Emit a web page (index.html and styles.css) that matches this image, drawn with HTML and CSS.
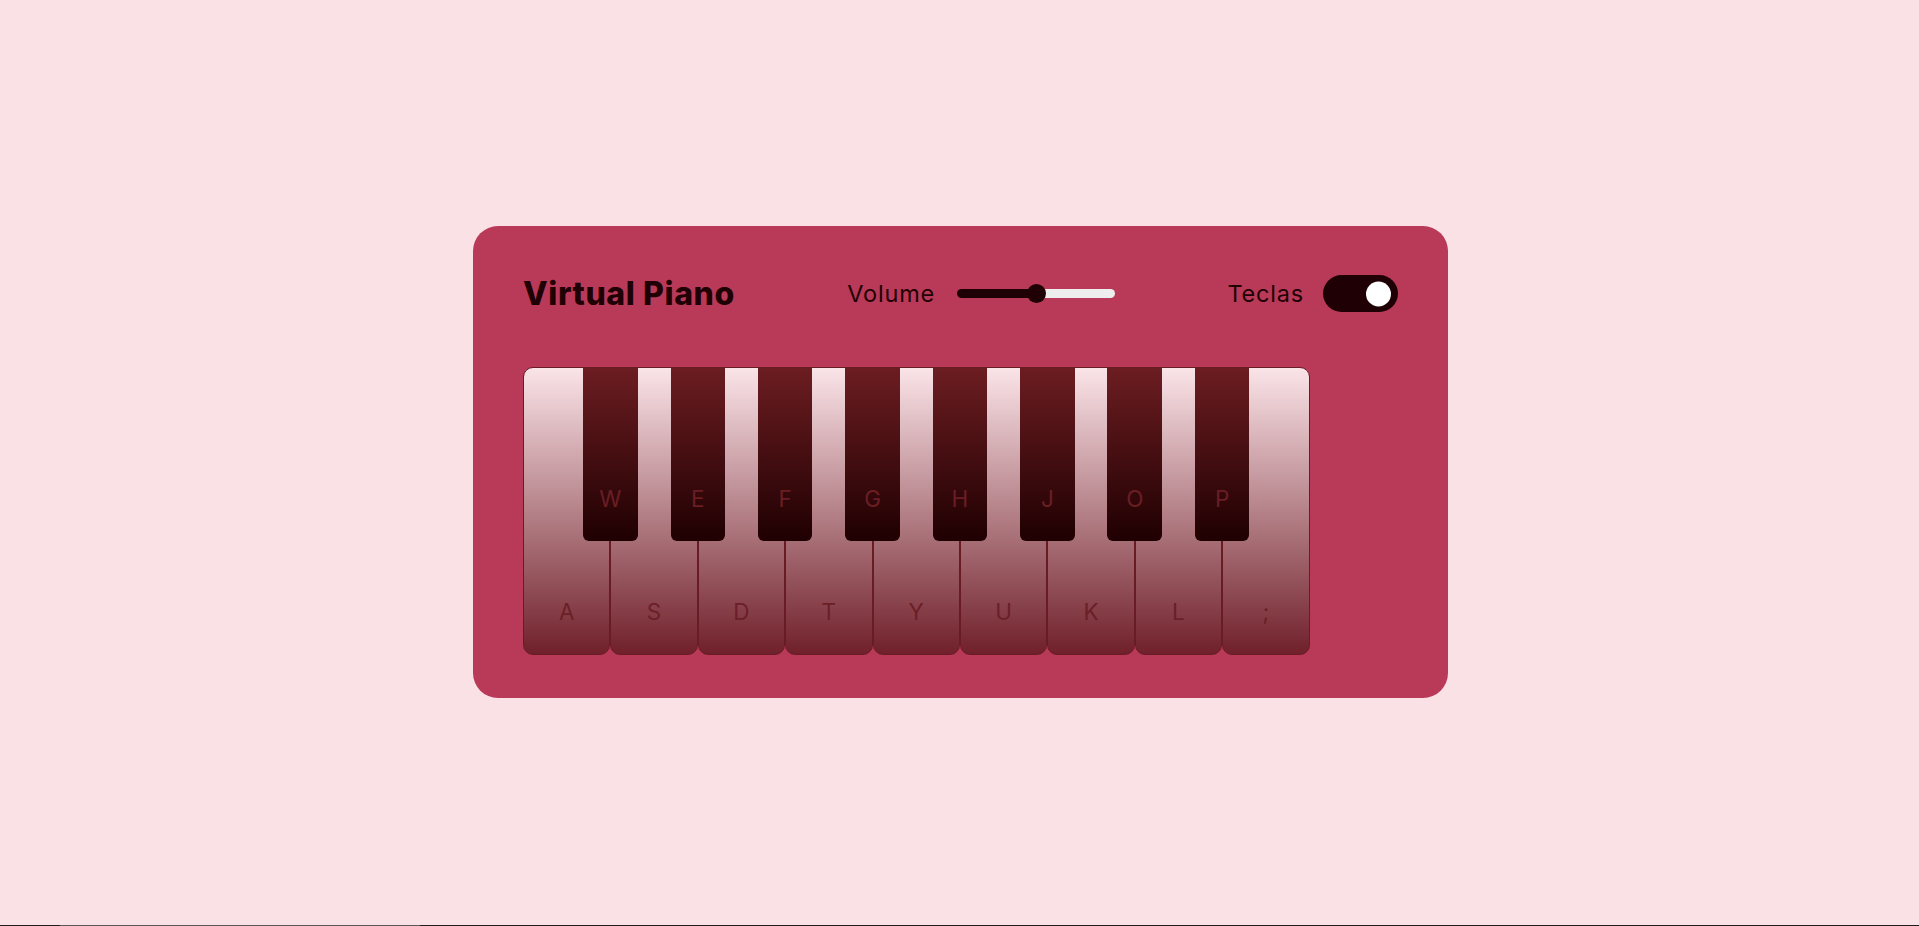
FILE: index.html
```html
<!DOCTYPE html>
<html lang="pt">
<head>
<meta charset="utf-8">
<title>Virtual Piano</title>
<link rel="stylesheet" href="styles.css">
</head>
<body>
  <div class="wrapper">
    <header class="header">
      <h2 class="title">Virtual Piano</h2>
      <div class="column volume-slider">
        <span class="label">Volume</span>
        <input class="range" type="range" min="0" max="1" value="0.5" step="any">
      </div>
      <div class="column keys-checkbox">
        <span class="label">Teclas</span>
        <input class="switch" type="checkbox" checked>
      </div>
    </header>
    <ul class="piano-keys">
      <li class="key white"><span>a</span></li>
      <li class="key black"><span>w</span></li>
      <li class="key white"><span>s</span></li>
      <li class="key black"><span>e</span></li>
      <li class="key white"><span>d</span></li>
      <li class="key black"><span>f</span></li>
      <li class="key white"><span>t</span></li>
      <li class="key black"><span>g</span></li>
      <li class="key white"><span>y</span></li>
      <li class="key black"><span>h</span></li>
      <li class="key white"><span>u</span></li>
      <li class="key black"><span>j</span></li>
      <li class="key white"><span>k</span></li>
      <li class="key black"><span>o</span></li>
      <li class="key white"><span>l</span></li>
      <li class="key black"><span>p</span></li>
      <li class="key white"><span>;</span></li>
    </ul>
  </div>
  <div class="bottom-strip"><div class="bottom-strip-thumb"></div></div>
</body>
</html>
```

FILE: styles.css
```css
* {
  box-sizing: border-box;
}

html, body {
  margin: 0;
  padding: 0;
}

body {
  min-height: 100vh;
  display: flex;
  align-items: center;
  justify-content: center;
  background: #f9e1e5;
  font-family: "Inter", "Open Sans", sans-serif;
}

.wrapper {
  width: 975px;
  margin: 0 0 2px 2px;
  padding: 43.75px 50px;
  border-radius: 25px;
  background: #b83a58;
}

.header {
  display: flex;
  align-items: center;
  justify-content: space-between;
  color: #1f0004;
}

.title {
  margin: 0;
  font-size: 32px;
  line-height: 48px;
  font-weight: 800;
  letter-spacing: 0.6px;
  color: #1f0004;
}

.column {
  display: flex;
  align-items: center;
}

.label {
  font-size: 23.5px;
  font-weight: 400;
  letter-spacing: 0.8px;
  margin-right: 19px;
  color: #1f0004;
}

.range {
  -webkit-appearance: none;
  appearance: none;
  width: 158px;
  height: 9px;
  margin: 0 0 0 3px;
  border-radius: 5px;
  background: linear-gradient(to right, #1f0004 0%, #1f0004 50%, #eeeeee 50%, #eeeeee 100%);
  outline: none;
}

.range::-webkit-slider-thumb {
  -webkit-appearance: none;
  appearance: none;
  width: 19px;
  height: 19px;
  border-radius: 50%;
  background: #1f0004;
  border: none;
}

.switch {
  -webkit-appearance: none;
  appearance: none;
  position: relative;
  margin: 0;
  width: 75px;
  height: 37.5px;
  border-radius: 37.5px;
  background: #1f0004;
}

.switch::before {
  content: "";
  position: absolute;
  top: 50%;
  left: 43px;
  width: 25px;
  height: 25px;
  border-radius: 50%;
  transform: translateY(-50%);
  background: #ffffff;
}

.piano-keys {
  display: flex;
  list-style: none;
  margin: 49.5px 0 0 0;
  padding: 0;
}

.key {
  position: relative;
  text-transform: uppercase;
  user-select: none;
}

.key span {
  position: absolute;
  bottom: 25px;
  left: 0;
  width: 100%;
  text-align: center;
  font-size: 22.5px;
  line-height: 34px;
  color: #6b1f26;
}

.white {
  width: 87.4px;
  height: 287.5px;
  border: 1px solid #6a1c24;
  border-radius: 10px;
  background: linear-gradient(#fae4e8, #70202a);
}

.black {
  z-index: 2;
  width: 54.5px;
  height: 174px;
  margin: 0 -27.25px;
  border-radius: 0 0 6px 6px;
  background: linear-gradient(#6c1d21, #1f0002);
}

.black span {
  color: #6a1e24;
}

.bottom-strip {
  position: fixed;
  left: 0;
  right: 0;
  bottom: 0;
  height: 1px;
  background: #231a1b;
}

.bottom-strip-thumb {
  margin-left: 60px;
  width: 360px;
  height: 1px;
  background: #5d5456;
}
```
